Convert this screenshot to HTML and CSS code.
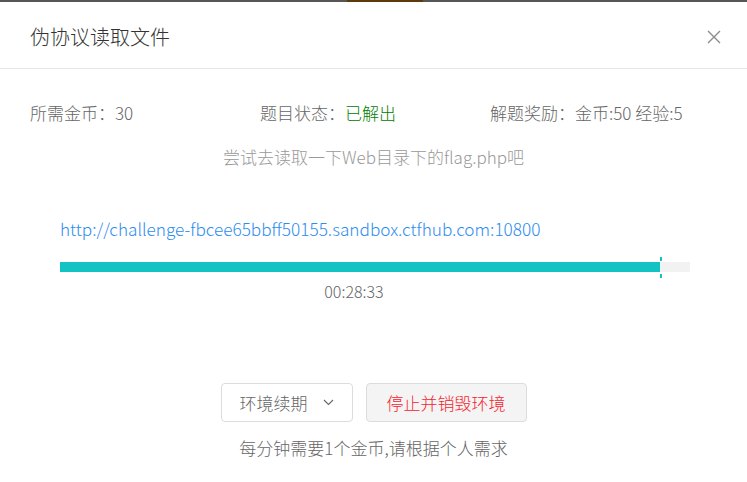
FILE: index.html
```html
<!DOCTYPE html>
<html lang="zh-CN">

<head>
  <meta charset="UTF-8" />
  <meta name="viewport" content="width=device-width, initial-scale=1.0" />
  <link rel="stylesheet" href="styles.css">
</head>

<body>
  <div class="topbar">
    <div class="topbar-left"></div>
    <div class="topbar-mark"></div>
    <div class="topbar-right"></div>
  </div>

  <div class="modal">
    <div class="modal-header">
      <span class="modal-title">伪协议读取文件</span>
      <span class="modal-close">
        <svg width="14" height="14" viewBox="0 0 14 14">
          <path d="M1 1 L13 13 M13 1 L1 13" stroke="#8c8c8c" stroke-width="1.4" fill="none" />
        </svg>
      </span>
    </div>

    <div class="modal-body">
      <div class="info">
        <span>所需金币：30</span>
        <span>题目状态：<span class="solved">已解出</span></span>
        <span>解题奖励：金币:50 经验:5</span>
      </div>
      <div class="desc">尝试去读取一下Web目录下的flag.php吧</div>

      <div class="env">
        <a class="env-link" href="#">http://challenge-fbcee65bbff50155.sandbox.ctfhub.com:10800</a>
        <div class="progress">
          <div class="progress-fill" style="width: 95.2%"></div>
          <div class="progress-rest"></div>
        </div>
        <div class="timer">00:28:33</div>
      </div>

      <div class="actions">
        <button class="btn">环境续期
          <svg width="11" height="7" viewBox="0 0 11 7">
            <path d="M1 1 L5.5 5.5 L10 1" stroke="#666" stroke-width="1.1" fill="none" />
          </svg>
        </button>
        <button class="btn btn-danger">停止并销毁环境</button>
      </div>
      <div class="note">每分钟需要1个金币,请根据个人需求</div>
    </div>
  </div>
</body>

</html>
```

FILE: styles.css
```css
* {
  box-sizing: border-box;
}

html,
body {
  margin: 0;
  height: 100%;
  background-color: #fff;
}

body {
  font-family: "Noto Sans CJK SC", "Noto Sans", sans-serif;
  font-weight: 300;
  color: #666;
  display: flex;
  flex-direction: column;
}

.topbar {
  display: flex;
  height: 2px;
  flex-shrink: 0;
}

.topbar-left {
  width: 347px;
  background-color: #565656;
}

.topbar-right {
  flex: 1;
  background-color: #565656;
}

.topbar-mark {
  width: 76px;
  background-color: #5b3a0c;
}

.modal {
  flex: 1;
  background-color: #fff;
  border-radius: 3px 3px 0 0;
}

.modal-header {
  display: flex;
  align-items: center;
  justify-content: space-between;
  height: 67px;
  padding: 0 26px 0 30px;
  border-bottom: 1px solid #e8e8e8;
}

.modal-title {
  font-size: 20px;
  color: #333;
  line-height: 28px;
  margin-top: 3px;
}

.modal-close {
  display: flex;
  margin-top: 4px;
}

.modal-body {
  padding: 0 30px;
}

.info {
  display: grid;
  grid-template-columns: 230px 230px 1fr;
  font-size: 17px;
  line-height: 24px;
  padding-top: 32px;
  white-space: nowrap;
}

.solved {
  color: #008000;
}

.desc {
  text-align: center;
  color: #999;
  font-size: 17px;
  line-height: 24px;
  margin-top: 20px;
}

.env {
  padding: 0 27px 0 30px;
  margin-top: 48px;
}

.env-link {
  display: block;
  color: #2d8cf0;
  font-size: 17.2px;
  line-height: 24px;
  text-decoration: none;
}

.progress {
  display: flex;
  height: 10px;
  margin-top: 21px;
  background-color: #f2f2f2;
}

.progress-fill {
  position: relative;
  background-color: #13c2c2;
}

.progress-fill::after {
  content: "";
  position: absolute;
  right: -2px;
  top: -5px;
  bottom: -6px;
  width: 2px;
  background: linear-gradient(#13c2c2 0 4px, transparent 4px 17px, #13c2c2 17px);
}

.timer {
  text-align: center;
  font-size: 16px;
  line-height: 22px;
  margin-top: 8px;
  padding-right: 42px;
}

.actions {
  display: flex;
  justify-content: center;
  gap: 13px;
  margin-top: 81px;
}

.btn {
  display: flex;
  align-items: center;
  gap: 15px;
  height: 39px;
  padding: 0 18px;
  font-family: inherit;
  font-weight: 300;
  font-size: 17px;
  color: #666;
  background-color: #fff;
  border: 1px solid #dcdcdc;
  border-radius: 4px;
}

.btn-danger {
  color: #f5222d;
  background-color: #f4f4f4;
  padding: 0 20px;
}

.note {
  text-align: center;
  font-size: 17px;
  line-height: 24px;
  margin-top: 14px;
}
```
